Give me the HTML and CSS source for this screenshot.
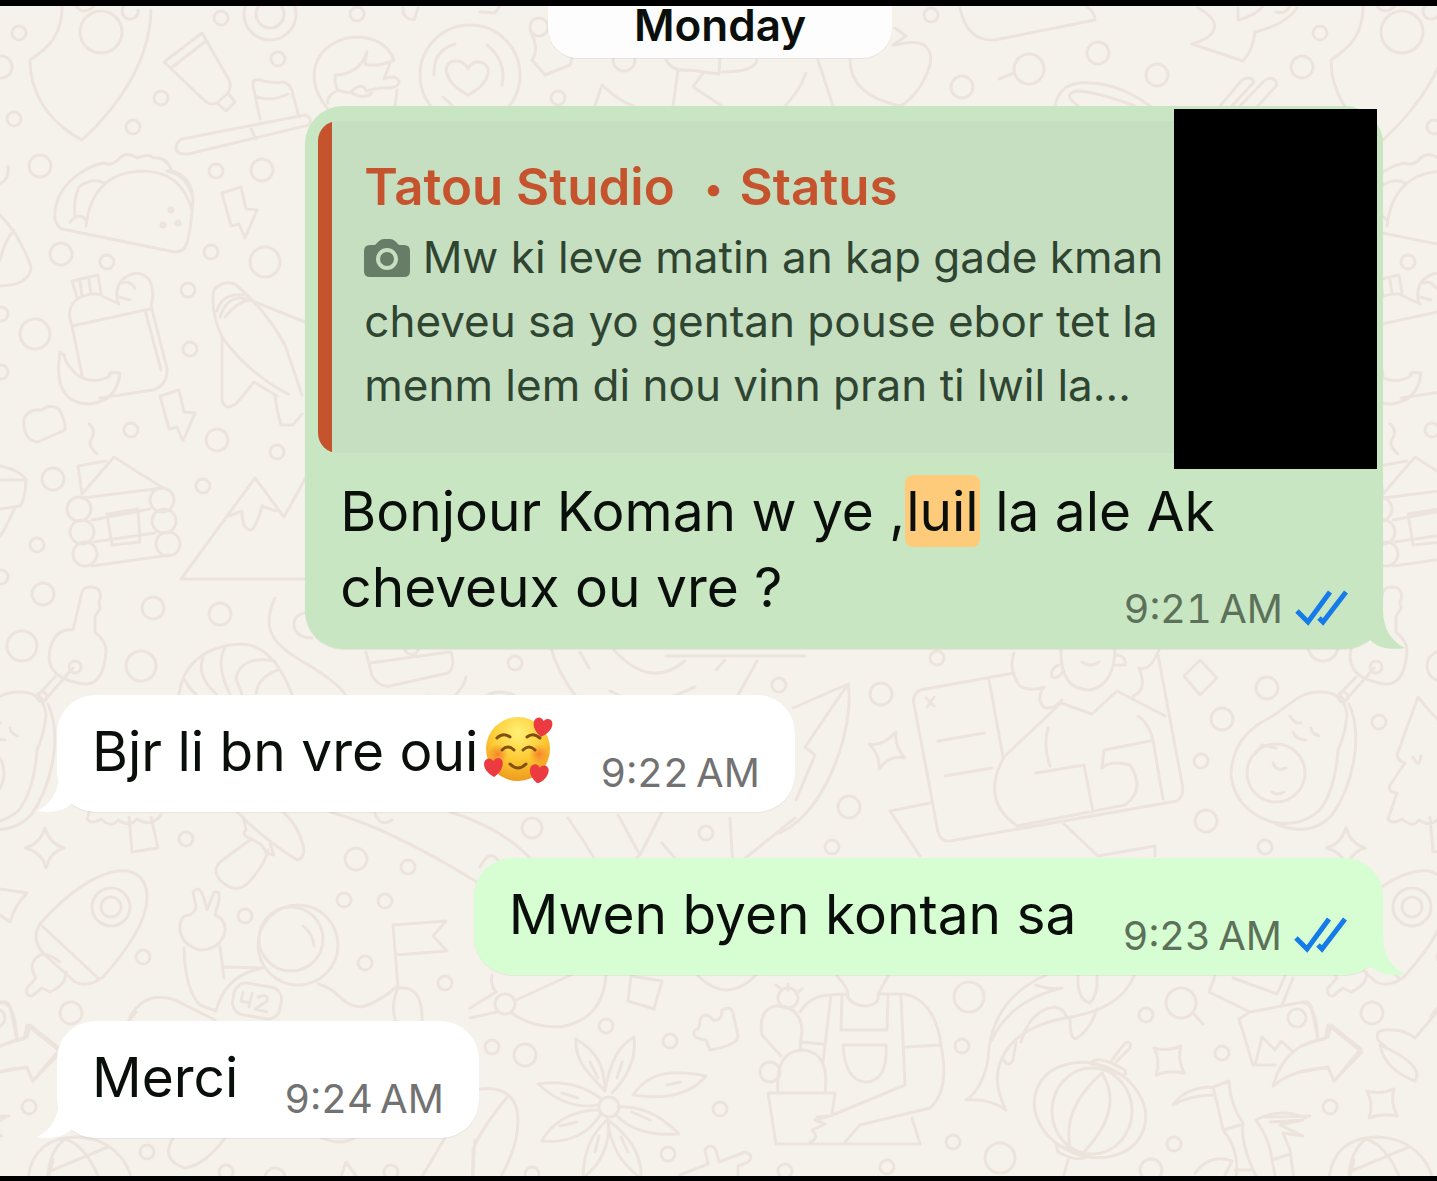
FILE: index.html
```html
<!DOCTYPE html>
<html lang="ht">
<head>
<meta charset="utf-8">
<meta name="viewport" content="width=device-width, initial-scale=1">
<title>Tatou Studio – Chat</title>
<link rel="stylesheet" href="styles.css">
</head>
<body>
<main class="chat">
  <svg class="wallpaper" viewBox="0 0 1437 1181" preserveAspectRatio="xMinYMin slice" aria-hidden="true">
    <defs>
      <g id="doodles">
        <!-- guitar pick and circles -->
        <path d="M62 0C64 35 48 48 30 60C30 90 45 120 82 140C120 105 150 60 151 10M76 6Q84 16 94 6M124 6A8 8 0 1 0 138 10"/>
        <circle cx="101" cy="32" r="21"/><circle cx="270" cy="14" r="26"/><circle cx="270" cy="14" r="14"/>
        <!-- toothpaste and brush -->
        <path d="M202 33L164 62L204 100Q210 106 217 103L228 93Q232 86 229 80ZM206 41L171 68M217 103L226 111L235 102L228 93"/>
        <path d="M260 119L254 90Q250 78 260 80Q275 84 283 82Q292 84 293 95L299 117M257 97Q272 102 288 94M182 139L305 115Q313 118 309 125L188 154Q175 155 176 147Q177 141 182 139M251 129L256 139"/>
        <!-- woman with glasses -->
        <path d="M327 108C300 75 318 40 355 37Q385 37 394 60Q375 68 365 64Q366 56 367 52Q360 74 335 75Q335 87 338 90Q326 96 328 103M338 90Q350 95 353 90Q363 82 366 91L380 88Q400 89 399 81Q395 74 384 79L390 63M397 90L395 106M352 93Q363 100 372 93"/>
        <!-- latte -->
        <circle cx="470" cy="75" r="50"/><path d="M468 95C443 82 441 62 455 61Q465 61 468 69Q473 59 483 63C496 70 483 88 468 95M434 75Q433 50 455 44M487 45Q507 61 502 85M443 97L452 105"/>
        <!-- taco -->
        <path d="M62 229Q52 224 56 205C62 180 90 165 104 163Q110 166 117 161Q125 150 137 158Q150 153 153 158Q166 156 172 171Q192 177 193 200Q190 240 185 247Q181 254 170 251ZM86 226C90 190 110 172 142 171C170 171 185 185 192 210M75 217Q73 200 79 187Q92 177 104 183M70 222Q79 211 86 220M167 171Q188 175 193 199"/>
        <circle cx="163" cy="225" r="2"/><circle cx="171" cy="210" r="2"/><circle cx="178" cy="223" r="2"/>
        <!-- bolts -->
        <path id="bolt" d="M222 193L241 187L246 209L257 210L245 238L239 224L231 226Z"/>
        <use href="#bolt" transform="translate(-62 203)"/>
        <!-- bag of groceries -->
        <path d="M77 297L72 281L98 275L101 293M80 282L82 296M89 280L91 294M72 326C63 301 82 293 98 294L119 304M72 326L150 309M72 326L82 375M118 303Q114 290 122 280Q139 266 150 281Q155 293 151 306L167 368Q168 385 153 390L100 398M145 310L161 370M122 283Q130 280 135 288M119 297L130 300"/>
        <path d="M60 352Q52 404 90 404Q117 401 120 373Q107 371 110 376Q92 386 76 374Q65 363 64 355Z"/>
        <!-- surfboard -->
        <path d="M214 290Q222 280 235 284Q266 310 285 345L302 395M214 290Q210 310 222 337Q248 373 288 394M220 317Q228 292 250 300Q238 301 225 317M217 311Q222 293 243 295M222 337V400Q225 412 237 403L254 382L277 396M250 300L305 322M275 396Q277 412 281 425L293 425L302 414"/>
        <!-- slice on the left edge -->
        <path d="M0 215Q20 235 31 267Q30 285 0 286M14 230Q5 240 0 260M0 466Q20 470 26 480Q25 500 20 506L0 509M26 480H0M14 509Q5 530 0 536M8 166Q10 178 0 184"/>
        <!-- cloud, smoke and cabin -->
        <path d="M24 418Q30 408 42 410Q48 404 58 408Q66 420 65 430L38 442Q22 440 24 418M89 424Q97 430 91 440Q87 445 97 454"/>
        <path d="M82 494L78 466L106 461M82 494L114 457L163 488L82 498M92 520L150 509M94 542L155 533M92 566L170 555M107 514L138 509L140 542L112 545Z"/>
        <circle cx="79" cy="509" r="12"/><circle cx="82" cy="532" r="12"/><circle cx="85" cy="554" r="12"/><circle cx="162" cy="500" r="12"/><circle cx="164" cy="521" r="12"/><circle cx="168" cy="544" r="12"/>
        <!-- mountain -->
        <path d="M340 579H181L255 478L284 517L310 470M226 517L242 511Q242 530 251 530Q256 528 262 506L276 511"/>
        <!-- key with avocado -->
        <path d="M73 630L82 592Q85 585 97 588Q103 594 99 602L100 609L95 616L95 632Q107 642 106 652Q103 690 78 683Q40 675 52 643Q58 628 73 630M73 668L44 701L38 695L55 677"/><circle cx="75" cy="667" r="6"/><circle cx="42" cy="697" r="5"/>
        <path d="M1320 692Q1345 692 1347 715Q1345 735 1338 750Q1335 790 1320 810Q1300 828 1272 822Q1235 810 1231 775Q1232 740 1262 722C1290 708 1295 692 1320 692M1349 704C1365 740 1350 790 1332 815Q1310 838 1276 824M1290 716Q1294 724 1301 723M1293 732Q1296 740 1306 740M1311 728Q1311 733 1319 736M1273 763Q1276 772 1286 768M1272 792Q1277 796 1284 792M1255 754L1262 745L1276 748"/><circle cx="1276" cy="773" r="29"/>
        <!-- tree -->
        <path d="M1418 697L1397 755Q1399 762 1405 763L1390 785Q1387 792 1397 793L1388 819Q1392 825 1402 819Q1413 829 1419 820Q1430 828 1438 819Q1452 828 1462 815M1418 697Q1430 712 1440 722M1413 757Q1419 770 1421 756M129 817L132 852L158 848L151 817"/>
        <!-- croissant -->
        <path d="M179 694C184 660 210 645 242 644C270 645 285 675 293 697M185 680Q190 690 196 694M203 658Q196 675 216 694M225 648Q215 665 230 694M275 661Q240 655 236 679L242 694M278 670Q258 677 256 694M275 598C260 630 275 645 300 660Q335 680 345 694M308 612Q290 615 295 630Q300 638 312 638"/>
        <!-- cups -->
        <path d="M366 652L372 676Q380 688 390 686L448 673Q456 667 451 652M370 663L449 652M428 696Q445 698 452 698Q464 688 466 677M484 698Q495 688 514 695M550 645Q557 672 577 698M580 652L589 668M614 650Q650 690 685 661M666 656H805M716 670L725 660M757 661L737 697M610 691L625 698M669 698L695 687M405 650A7 7 0 0 0 418 650"/>
        <!-- feather -->
        <path d="M793 708L848 684C855 720 830 810 780 833M848 684L805 747L815 755L796 800"/>
        <!-- reader with notebook -->
        <path d="M1014 673L920 690Q912 695 914 704L938 832Q941 842 950 841L1177 801Q1185 795 1182 783L1158 655M989 680L1003 757M938 741L984 733M945 776L992 768M926 698L934 706M934 697L927 707M1014 653Q1008 670 1020 686Q1030 692 1044 687Q1035 700 1045 708Q1055 709 1062 700M1061 650Q1060 690 1090 690Q1114 685 1115 650M1059 665Q1050 668 1052 677Q1058 680 1063 671M1116 655Q1127 656 1125 665L1116 665M1139 668Q1150 672 1159 650M1139 668Q1148 690 1133 696M1061 703L1092 714L1117 691L1165 716M1061 703L1004 757Q980 800 1017 826L1125 805Q1146 790 1130 765Q1110 760 1102 768L1104 750L1150 741M1048 728Q1043 745 1050 766M1036 773L1084 765L1093 812M1138 716Q1152 725 1155 752L1163 799M930 803L890 811L920 856M1064 824L1098 856L1155 846V856M1082 662Q1090 668 1099 662M1200 660L1217 678L1200 695L1184 676Z"/>
        <!-- sparkles -->
        <path d="M45 828Q50 844 64 848Q50 852 46 868Q42 852 25 848Q40 844 45 828Z"/>
        <path d="M869 744Q882 747 896 732Q894 746 905 758Q890 754 879 769Q880 754 869 744Z"/>
        <path id="star" d="M1154 1048Q1167 1052 1181 1046Q1177 1058 1184 1073Q1168 1070 1156 1075Q1161 1061 1154 1048Z"/>
        <use href="#star" transform="translate(213 43)"/>
        <!-- mushroom -->
        <path d="M237 812Q265 840 297 860Q306 858 303 845Q298 825 283 812M243 816L246 830Q240 835 252 839M251 839Q265 845 266 853L274 855L270 844M251 839L220 862Q212 870 220 880Q235 895 248 883Q265 865 268 850M330 812Q390 828 480 884M450 812Q510 830 540 870M375 813Q380 828 392 820M568 818Q590 850 598 865Q620 875 640 855L662 812M618 815L640 855M480 867Q490 847 499 862L483 890"/>
        <path d="M730 818L733 868L795 818M662 843L690 876"/>
        <!-- rocket -->
        <path d="M40 924C65 895 100 868 128 871Q148 876 147 900Q145 930 103 977Q88 988 75 982L45 955Q30 940 40 924L98 978M37 957Q28 965 36 978L27 988Q25 996 32 996L42 988L50 992Q66 985 66 972M37 957Q45 950 60 962"/><circle cx="111" cy="907" r="19"/><circle cx="111" cy="907" r="10"/>
        <path d="M0 889L27 893Q15 905 10 922L0 915"/>
        <!-- astronaut -->
        <circle cx="298" cy="945" r="40"/><circle cx="291" cy="939" r="32"/><path d="M303 926Q313 934 314 946M180 930Q179 915 190 915Q198 910 195 902L193 892Q199 884 204 898L207 910L214 892Q222 890 218 904L215 915Q228 920 224 935Q218 950 200 950Q182 945 180 930M184 948Q185 990 200 1005L216 1011Q225 975 263 968M220 947L224 978M224 967L263 968M130 1017Q145 990 175 1000L215 1020M318 984C340 990 340 1005 360 1007Q375 1005 396 987M398 988L393 925L446 921L433 936L447 951L395 955M398 988Q423 985 422 1020M398 988Q390 1005 396 1022"/>
        <rect x="233" y="985" width="48" height="32" rx="12" transform="rotate(10 257 1001)"/><path d="M243 992L241 1001L250 1003M252 993L249 1007M258 997Q269 993 267 1001L255 1009L267 1012"/>
        <!-- arrow and globe -->
        <path d="M0 1046L27 1037L30 1025L60 1049L33 1081L27 1067L0 1072M0 1003Q14 1000 17 1038"/>
        <path d="M28 1181C30 1150 50 1137 76 1137C110 1138 128 1160 132 1181M48 1175Q50 1150 65 1139Q85 1145 98 1176M48 1172L108 1147M48 1180L53 1160"/>
        <path d="M173 1138Q160 1160 185 1168Q205 1165 225 1138M420 1180L445 1138M340 1180L346 1162L357 1177M475 1140L472 1180M322 1138Q340 1146 355 1138"/>
        <!-- bird -->
        <path d="M492 975Q490 985 496 992L470 1008M470 1018L497 1012M514 1001L575 973M606 975Q603 1020 560 1027Q530 1027 512 1013M631 976L662 981L654 1009L628 1001ZM698 976Q728 1005 757 974"/><circle cx="505" cy="1004" r="10"/>
        <!-- flower -->
        <path d="M605 1091C585 1070 575 1060 576 1039C595 1050 605 1065 605 1091C610 1060 620 1045 634 1037C637 1060 625 1080 612 1093M598 1105C570 1110 550 1095 538 1084C565 1080 585 1087 600 1098M598 1110C570 1110 550 1125 542 1141C570 1144 590 1132 600 1115M607 1120C590 1135 583 1155 583 1178C600 1165 611 1145 608 1120C635 1140 642 1160 641 1178C622 1165 610 1145 608 1120M618 1107C645 1105 665 1120 679 1134C650 1136 630 1130 615 1114M633 1095C650 1070 675 1070 706 1076C690 1095 665 1100 633 1095M590 1062L598 1078M622 1062L617 1078M562 1093L578 1098M560 1126L577 1122M595 1152L599 1136M628 1152L621 1137M632 1112L650 1120M667 1085L680 1082"/><circle cx="609" cy="1107" r="10"/>
        <!-- seed and puzzle -->
        <path d="M480 1089Q510 1085 517 1110Q522 1140 500 1178M508 1096Q480 1130 473 1150V1178M700 1020Q705 1010 713 1020Q722 1022 722 1010Q733 1004 734 1018L738 1036Q738 1045 710 1050L706 1040Q690 1038 695 1030Q700 1030 700 1020M680 1175L708 1164L705 1150Q710 1142 716 1150L719 1162L745 1152Q755 1155 748 1162L738 1166V1178"/>
        <!-- gardener -->
        <path d="M800 1012Q810 996 829 995L848 994M837 976Q850 990 847 995Q850 1005 865 1006Q880 1005 878 994L888 976M878 994H904Q935 1000 941 1045L906 1047M831 995L823 1062M901 996L905 1085L830 1116L817 1117M842 996L841 1030H887L888 996M843 1045H886Q888 1082 865 1082Q845 1080 843 1045M941 1045Q950 1090 930 1108L860 1125L845 1142M912 1118L920 1144H776L768 1093H835L832 1113M778 1093Q775 1050 803 1050Q830 1052 825 1093M781 1056L762 1035Q758 1010 775 1006Q800 1005 802 1030L800 1050M800 1042L823 1044M830 1116L815 1120L825 1124L812 1130Q820 1138 810 1142M776 985L780 988M788 990V984M796 994L802 989"/><circle cx="788" cy="998" r="10"/><circle cx="770" cy="1072" r="10"/>
        <!-- fish -->
        <path d="M1046 975Q990 1000 988 1060Q982 1090 966 1100Q990 1098 1006 1110C985 1070 1003 1030 1065 1018Q1120 1010 1134 976M1036 985Q1050 990 1062 988Q1010 1000 992 1040M1078 976Q1077 1000 1090 1003Q1098 995 1097 976M1021 1042Q1030 1010 1055 1007Q1065 1010 1066 1016M1070 1018Q1070 1042 1077 1038Q1090 1030 1097 1009M1004 1060Q1008 1068 1013 1060L1016 1042"/>
        <!-- lantern -->
        <ellipse cx="1090" cy="1110" rx="57" ry="46" transform="rotate(22 1090 1110)"/><ellipse cx="1092" cy="1111" rx="40" ry="43"/><path d="M1102 1073Q1060 1110 1071 1151M1102 1073Q1125 1110 1082 1154M1091 1064Q1095 1053 1125 1070Q1128 1078 1117 1073Q1105 1066 1091 1064M1112 1060L1125 1043Q1132 1040 1130 1048L1116 1062M1056 1145Q1075 1150 1088 1155Q1080 1164 1058 1152ZM1068 1160L1063 1178"/>
        <!-- bamboo -->
        <path d="M1173 1105Q1185 1087 1213 1087L1229 1081Q1230 1105 1243 1123Q1240 1145 1258 1180M1213 1087Q1220 1115 1223 1130L1240 1125M1223 1130Q1240 1150 1236 1180M1173 1105Q1190 1095 1215 1095M1235 1170H1252M1306 1118Q1280 1107 1256 1120Q1270 1140 1272 1160L1276 1180M1270 1122L1303 1120L1280 1125L1303 1136L1283 1133L1290 1150L1294 1180M1272 1160L1290 1154M1195 1173Q1210 1153 1232 1161L1225 1175M1265 1117L1310 1116"/>
        <!-- picture and forward arrow -->
        <path d="M1215 976L1209 992L1250 1012L1303 1002Q1310 1000 1312 1010L1318 1040M1250 1012L1239 1019L1253 1065H1275M1255 1065L1262 1037L1275 1050L1281 1041L1292 1051M1273 1086Q1285 1043 1325 1039L1328 1025L1362 1052L1334 1081L1328 1068Q1295 1068 1273 1086M1233 978L1277 994L1285 976M1293 978L1282 1005"/><circle cx="1297" cy="1018" r="9"/>
        <path d="M1388 1049L1378 1040Q1374 1028 1392 1030Q1405 1030 1415 1038L1437 1012M1380 1045Q1385 1070 1415 1081Q1425 1065 1380 1045"/>
        <circle cx="1181" cy="1003" r="15"/><path d="M1193 1013L1203 1024"/>
        <!-- top row -->
        <path d="M960 8Q967 42 995 40L1095 20Q1095 12 1086 6M1198 8C1220 20 1222 35 1192 44L1243 61Q1253 50 1255 32Q1285 25 1297 8M1238 8V20Q1255 16 1263 6M1276 12Q1285 15 1290 6M999 79L1014 73M1055 106Q1060 80 1090 83Q1120 84 1150 106M1078 106Q1060 92 1080 91Q1100 93 1135 106M1220 106L1242 80Q1250 75 1254 82L1232 106M1240 106L1265 80Q1275 75 1277 85L1258 106M530 30Q540 50 532 60L545 75L570 65L572 58M595 106L602 85Q620 102 634 106M666 60Q672 72 690 70L719 74L720 58M678 70L673 106M703 73L693 87L722 106M722 72Q755 72 757 60M785 106Q800 90 806 73M818 60L833 106M895 28L906 36L893 45M895 45Q935 35 930 65Q920 95 900 106Q850 95 850 60M480 12L495 13L500 6M403 8Q402 18 414 20L418 8"/>
        <circle cx="1029" cy="69" r="15"/>
        <!-- confetti -->
        <circle cx="19" cy="33" r="7"/><circle cx="1" cy="67" r="11"/><circle cx="14" cy="119" r="7"/><circle cx="221" cy="18" r="7"/><circle cx="278" cy="59" r="7"/><circle cx="161" cy="98" r="7"/><circle cx="133" cy="127" r="7"/><circle cx="40" cy="166" r="11"/><circle cx="216" cy="171" r="7"/><circle cx="262" cy="170" r="11"/><circle cx="61" cy="254" r="11"/><circle cx="107" cy="262" r="7"/><circle cx="211" cy="252" r="7"/><circle cx="265" cy="262" r="15"/><circle cx="188" cy="290" r="7"/><circle cx="35" cy="334" r="15"/><circle cx="190" cy="349" r="7"/><circle cx="1" cy="314" r="7"/><circle cx="1" cy="372" r="7"/><circle cx="131" cy="430" r="7"/><circle cx="217" cy="440" r="11"/><circle cx="277" cy="452" r="7"/><circle cx="53" cy="479" r="11"/><circle cx="203" cy="486" r="7"/><circle cx="37" cy="545" r="7"/><circle cx="1" cy="577" r="7"/><circle cx="43" cy="594" r="11"/><circle cx="153" cy="608" r="11"/><circle cx="220" cy="614" r="11"/><circle cx="22" cy="646" r="15"/><circle cx="141" cy="666" r="15"/>
        <circle cx="357" cy="14" r="7"/><circle cx="539" cy="27" r="9"/><circle cx="558" cy="98" r="7"/><circle cx="624" cy="60" r="11"/><circle cx="931" cy="15" r="7"/><circle cx="962" cy="87" r="11"/><circle cx="1098" cy="53" r="11"/><circle cx="1157" cy="75" r="11"/><circle cx="515" cy="663" r="7"/><circle cx="779" cy="685" r="7"/><circle cx="881" cy="694" r="11"/><circle cx="937" cy="658" r="7"/><circle cx="849" cy="807" r="11"/><circle cx="832" cy="847" r="7"/><circle cx="1222" cy="719" r="11"/><circle cx="1201" cy="761" r="7"/><circle cx="1206" cy="821" r="11"/><circle cx="1267" cy="688" r="11"/><circle cx="1379" cy="722" r="7"/><circle cx="532" cy="828" r="10"/><circle cx="706" cy="833" r="7"/><circle cx="1265" cy="847" r="7"/>
        <circle cx="186" cy="839" r="7"/><circle cx="356" cy="859" r="11"/><circle cx="408" cy="867" r="7"/><circle cx="344" cy="900" r="7"/><circle cx="385" cy="901" r="7"/><circle cx="245" cy="916" r="7"/><circle cx="143" cy="957" r="7"/><circle cx="365" cy="963" r="7"/><circle cx="445" cy="983" r="7"/><circle cx="71" cy="1013" r="11"/><circle cx="29" cy="1107" r="7"/><circle cx="147" cy="1152" r="7"/><circle cx="226" cy="1172" r="7"/><circle cx="275" cy="1178" r="10"/><circle cx="391" cy="1172" r="7"/><circle cx="492" cy="1047" r="7"/><circle cx="525" cy="1055" r="11"/><circle cx="606" cy="1026" r="7"/><circle cx="670" cy="1041" r="7"/><circle cx="720" cy="1109" r="7"/><circle cx="668" cy="1154" r="7"/><circle cx="532" cy="1174" r="7"/><circle cx="785" cy="1171" r="7"/><circle cx="887" cy="1167" r="7"/><circle cx="969" cy="997" r="15"/><circle cx="962" cy="1046" r="7"/><circle cx="953" cy="1142" r="7"/><circle cx="1000" cy="1158" r="15"/><circle cx="1146" cy="1015" r="7"/><circle cx="1222" cy="1053" r="7"/><circle cx="1174" cy="1144" r="7"/><circle cx="1151" cy="1170" r="11"/>
      </g>
    </defs>
    <use href="#doodles"/>
    <use href="#doodles" x="1301"/>
    <use href="#doodles" x="-1301"/>
  </svg>

  <time class="day">Monday</time>

  <article class="message sent matched">
    <section class="quote">
      <div class="quote-copy">
        <h2 class="quote-title">Tatou Studio <span class="dot">•</span> Status</h2>
        <p class="quote-text"><svg class="camera" viewBox="0 0 46 38" role="img" aria-label="Photo"><path fill="currentColor" fill-rule="evenodd" d="M6 6H11L15 2Q17 0 20 0H26Q29 0 31 2L35 6H40Q46 6 46 12V32Q46 38 40 38H6Q0 38 0 32V12Q0 6 6 6ZM23 9A11 11 0 1 0 23 31A11 11 0 1 0 23 9ZM23 13A7 7 0 1 1 23 27A7 7 0 1 1 23 13Z"/></svg> Mw ki leve matin an kap gade kman<br>cheveu sa yo gentan pouse ebor tet la<br>menm lem di nou vinn pran ti lwil la...</p>
      </div>
      <div class="thumbnail"></div>
    </section>
    <div class="body">
      <p class="text">Bonjour Koman w ye ,<mark>luil</mark> la ale Ak<br>cheveux ou vre ?</p>
      <span class="meta"><time>9:21&#8239;AM</time><svg class="ticks" viewBox="0 4 54 32" role="img" aria-label="Read"><path d="M2 22L13 33L35 3M24 29L28 33L51 3"/></svg></span>
    </div>
    <svg class="tail" viewBox="0 0 40 40" aria-hidden="true"><path d="M0 0H18C18 20 26 32 40 39C28 41 14 40 5 31L0 34Z"/></svg>
  </article>

  <article class="message received">
    <div class="body">
      <p class="text">Bjr li bn vre oui<svg class="emoji" viewBox="0 0 72 68" role="img" aria-label="Smiling face with hearts">
        <defs>
          <radialGradient id="face" cx=".5" cy=".25" r=".75"><stop offset="0" stop-color="#fff176"/><stop offset=".55" stop-color="#fdcb35"/><stop offset="1" stop-color="#ee9a1c"/></radialGradient>
          <radialGradient id="blush"><stop offset="0" stop-color="#f4742c" stop-opacity=".8"/><stop offset="1" stop-color="#f4742c" stop-opacity="0"/></radialGradient>
          <path id="heart" d="M9 20C2 15-1 9 1 4C3 0 8 0 10 4C13 0 18 1 19 5C20 11 15 17 9 20Z"/>
        </defs>
        <circle cx="36" cy="34" r="32" fill="url(#face)"/>
        <circle cx="16" cy="39" r="10" fill="url(#blush)"/><circle cx="57" cy="39" r="10" fill="url(#blush)"/>
        <path d="M15 23Q21 17 28 22M45 22Q51 17 58 23M20 35Q26 29 32 35M41 35Q47 29 53 35M28 49Q36 57 44 49" fill="none" stroke="#81500f" stroke-width="3" stroke-linecap="round"/>
        <g fill="#ec3b40"><use href="#heart" transform="translate(52 1) rotate(6)"/><use href="#heart" transform="translate(1 43) rotate(-6)"/><use href="#heart" transform="translate(48 48) rotate(4)"/></g>
      </svg></p>
      <span class="meta"><time>9:22&#8239;AM</time></span>
    </div>
    <svg class="tail" viewBox="0 0 40 40" aria-hidden="true"><path d="M0 0H18C18 20 26 32 40 39C28 41 14 40 5 31L0 34Z"/></svg>
  </article>

  <article class="message sent">
    <div class="body">
      <p class="text">Mwen byen kontan sa</p>
      <span class="meta"><time>9:23&#8239;AM</time><svg class="ticks" viewBox="0 4 54 32" role="img" aria-label="Read"><path d="M2 22L13 33L35 3M24 29L28 33L51 3"/></svg></span>
    </div>
    <svg class="tail" viewBox="0 0 40 40" aria-hidden="true"><path d="M0 0H18C18 20 26 32 40 39C28 41 14 40 5 31L0 34Z"/></svg>
  </article>

  <article class="message received">
    <div class="body">
      <p class="text">Merci</p>
      <span class="meta"><time>9:24&#8239;AM</time></span>
    </div>
    <svg class="tail" viewBox="0 0 40 40" aria-hidden="true"><path d="M0 0H18C18 20 26 32 40 39C28 41 14 40 5 31L0 34Z"/></svg>
  </article>
</main>
</body>
</html>
```
FILE: styles.css
```css
* {
  box-sizing: border-box;
}

body,
h2,
p {
  margin: 0;
}

body {
  font-family: Inter, "Liberation Sans", sans-serif;
  color: #0b0f0b;
  background: #000;
}

.chat {
  position: relative;
  display: flex;
  flex-direction: column;
  gap: 46px;
  min-height: 100vh;
  padding: 0 54px 36px 57px;
  border-top: 6px solid #000;
  border-bottom: 5px solid #000;
  background: #f5f2eb;
  overflow: hidden;
  isolation: isolate;
}

.wallpaper {
  position: absolute;
  z-index: -1;
  top: -6px;
  left: 0;
  width: 100%;
  height: calc(100% + 11px);
  fill: none;
  stroke: #ece4dc;
  stroke-width: 3;
  stroke-linejoin: round;
  stroke-linecap: round;
}

.day {
  align-self: center;
  width: 344px;
  height: 52px;
  margin-bottom: 2px;
  border-radius: 0 0 30px 30px;
  background: #fdfdfd;
  text-align: center;
  font-size: 44px;
  line-height: 38px;
  font-weight: 600;
  box-shadow: 0 1px 1px #0000000f;
}

.message {
  position: relative;
  max-width: 82%;
  padding: 18px 35px 23px;
  border-radius: 38px;
  box-shadow: 0 1px 1px #0000000f;
}

.sent {
  --bubble: #d7fed2;
  align-self: flex-end;
  background: var(--bubble);
}

.received {
  --bubble: #fff;
  align-self: flex-start;
  background: var(--bubble);
}

.matched {
  --bubble: #c7e6c1;
  width: 75vw;
  padding: 15px 6px 24px 13px;
}

.tail {
  position: absolute;
  bottom: 0;
  right: -22px;
  width: 40px;
  height: 40px;
  fill: var(--bubble);
}

.received .tail {
  right: auto;
  left: -20px;
  transform: scaleX(-1);
}

.quote {
  display: flex;
  height: 332px;
  padding-left: 14px;
  border-radius: 20px 0 0 20px;
  background: linear-gradient(to right, #c5532d 14px, #c6dfc1 14px);
}

.quote-copy {
  flex: 1;
  padding: 32px 0 0 32px;
  white-space: nowrap;
}

.quote-title {
  margin-bottom: 4px;
  color: #c5532d;
  font-size: 51px;
  line-height: 68px;
  font-weight: 600;
}

.dot {
  margin: 0 4px 0 17px;
  font-size: 36px;
  line-height: 36px;
  vertical-align: 4px;
}

.quote-text {
  color: #2f4532;
  font-size: 44px;
  line-height: 64px;
}

.camera {
  width: 46px;
  height: 38px;
  vertical-align: -4px;
  color: #687d67;
}

.thumbnail {
  width: 203px;
  height: 360px;
  margin-top: -12px;
  background: #000;
}

.body {
  display: flex;
  gap: 46px;
  align-items: flex-end;
}

.text {
  font-size: 55px;
  line-height: 76px;
}

.matched .body {
  display: grid;
  padding: 20px 28px 0 22px;
}

.matched .text,
.matched .meta {
  grid-area: 1 / 1;
}

.text mark {
  padding: 3px 1px;
  border-radius: 8px;
  background: #fdcb7a;
  color: inherit;
}

.meta {
  display: flex;
  align-items: center;
  justify-self: end;
  align-self: end;
  gap: 12px;
  color: #727272;
  font-size: 40px;
  line-height: 32px;
  font-variant-numeric: tabular-nums;
  white-space: nowrap;
}

.sent .meta {
  color: #5d715a;
}

.ticks {
  width: 54px;
  height: 32px;
  overflow: visible;
  fill: none;
  stroke: #147be8;
  stroke-width: 5;
}

.emoji {
  width: 72px;
  height: 68px;
  margin-left: 4px;
  vertical-align: -12px;
}
```
